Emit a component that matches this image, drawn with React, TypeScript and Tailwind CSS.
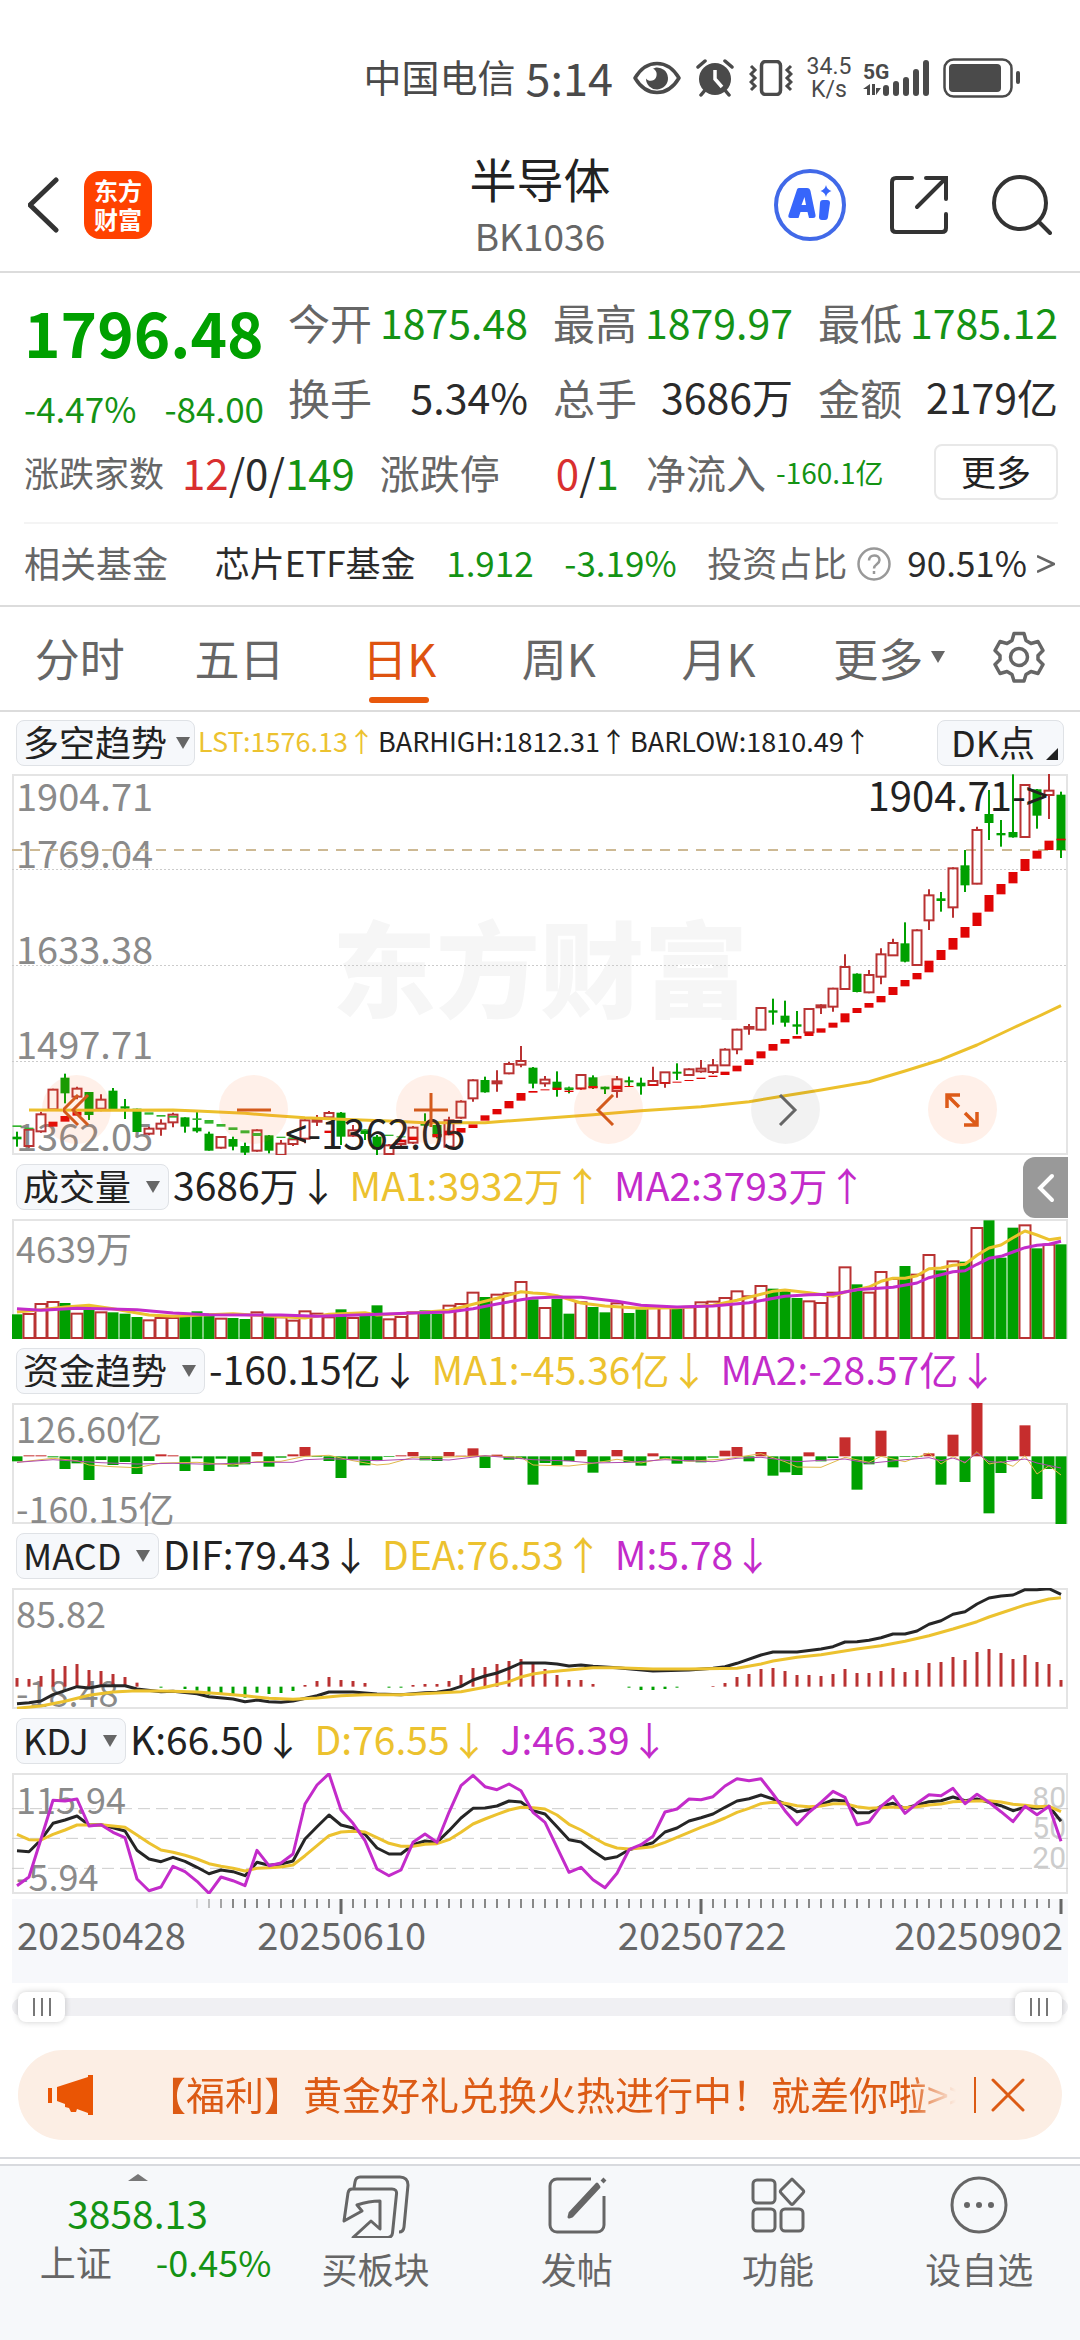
import React from "react";

const LEFT = 5;
const STEP = 12;
const px = (i: number) => LEFT + i * STEP;

type Candle = [kind: "r" | "g", high: number, low: number, top: number, bottom: number];

const candles: Candle[] = [
  ["g", 1115, 1160, 1130, 1138], ["r", 1106, 1163, 1109, 1158], ["r", 1055, 1118, 1063, 1114], ["r", 986, 1050, 989, 1048],
  ["g", 941, 1030, 953, 1000], ["r", 980, 1018, 986, 1010], ["g", 996, 1080, 996, 1065], ["r", 1003, 1054, 1019, 1046],
  ["g", 984, 1047, 992, 1047], ["g", 1017, 1077, 1039, 1046], ["g", 1046, 1116, 1046, 1116], ["r", 1100, 1126, 1106, 1121],
  ["r", 1078, 1127, 1091, 1106], ["r", 1058, 1102, 1064, 1087], ["g", 1072, 1118, 1072, 1100], ["g", 1053, 1118, 1103, 1114],
  ["g", 1115, 1172, 1121, 1172], ["r", 1128, 1166, 1131, 1163], ["g", 1130, 1171, 1137, 1160], ["g", 1148, 1185, 1158, 1178],
  ["r", 1108, 1175, 1111, 1172], ["g", 1125, 1180, 1126, 1172], ["r", 1140, 1186, 1151, 1185], ["r", 1132, 1158, 1138, 1152],
  ["r", 1078, 1150, 1081, 1136], ["r", 1065, 1098, 1080, 1085], ["r", 1053, 1075, 1059, 1072], ["g", 1056, 1155, 1058, 1130],
  ["r", 1095, 1130, 1111, 1127], ["g", 1108, 1140, 1110, 1122], ["g", 1125, 1185, 1130, 1168], ["r", 1152, 1185, 1156, 1182],
  ["r", 1138, 1165, 1142, 1152], ["r", 1098, 1152, 1103, 1148], ["g", 1060, 1130, 1090, 1097], ["g", 1092, 1135, 1095, 1130],
  ["r", 1070, 1162, 1081, 1160], ["r", 1021, 1076, 1025, 1073], ["r", 958, 1025, 961, 1015], ["g", 950, 998, 960, 997],
  ["r", 931, 995, 964, 970], ["r", 905, 943, 912, 940], ["r", 858, 922, 903, 914], ["g", 921, 985, 923, 971],
  ["r", 948, 980, 959, 970], ["g", 934, 1010, 965, 986], ["g", 980, 1000, 984, 990], ["r", 942, 989, 945, 985],
  ["g", 946, 987, 952, 984], ["g", 980, 1002, 980, 988], ["r", 948, 1013, 958, 993], ["g", 950, 978, 961, 967],
  ["g", 953, 1004, 968, 979], ["r", 920, 978, 963, 975], ["r", 936, 983, 937, 969], ["g", 910, 960, 935, 941],
  ["r", 925, 948, 928, 945], ["r", 900, 938, 926, 934], ["r", 897, 942, 916, 936], ["r", 865, 918, 869, 916],
  ["r", 806, 883, 809, 868], ["r", 792, 824, 801, 806], ["r", 741, 811, 744, 809], ["g", 716, 794, 751, 758],
  ["g", 722, 800, 767, 788], ["g", 753, 823, 793, 800], ["r", 744, 822, 747, 817], ["r", 733, 762, 736, 742],
  ["r", 683, 755, 686, 740], ["r", 583, 689, 621, 687], ["g", 640, 697, 641, 696], ["r", 630, 700, 645, 697],
  ["r", 565, 673, 583, 650], ["r", 536, 588, 549, 586], ["g", 487, 607, 550, 605], ["r", 508, 617, 511, 615],
  ["r", 388, 510, 406, 481], ["g", 396, 455, 415, 423], ["r", 322, 473, 325, 442], ["g", 270, 396, 316, 376],
  ["r", 200, 373, 210, 371], ["g", 90, 240, 162, 189], ["g", 180, 260, 219, 226], ["g", 43, 233, 216, 232],
  ["r", 72, 233, 75, 231], ["g", 87, 206, 88, 167], ["r", 42, 177, 92, 105], ["g", 95, 294, 104, 270],
];

const redBlocks: [number, number, number][] = [
  [3, 1085, 1100], [4, 1068, 1085], [5, 1055, 1067], [26, 1112, 1119], [32, 1140, 1147], [33, 1130, 1140], [35, 1122, 1132], [36, 1112, 1126],
  [37, 1104, 1118], [38, 1093, 1104], [39, 1066, 1082], [40, 1047, 1063], [41, 1023, 1045], [42, 999, 1022],
  [43, 993, 998], [44, 988, 991], [45, 983, 990], [46, 992, 996], [47, 985, 988], [48, 978, 985], [50, 977, 988],
  [51, 978, 981], [53, 973, 977], [54, 967, 970], [55, 965, 968], [56, 960, 963], [57, 953, 957], [58, 947, 951],
  [59, 935, 945], [60, 917, 934], [61, 898, 915], [62, 874, 895], [63, 852, 872], [64, 837, 851], [65, 828, 836],
  [66, 817, 828], [67, 805, 818], [68, 788, 803], [69, 760, 787], [70, 744, 759], [71, 729, 743], [72, 708, 727],
  [73, 681, 705], [74, 660, 679], [75, 639, 658], [76, 602, 637], [77, 570, 600], [78, 534, 569], [79, 501, 533],
  [80, 458, 498], [81, 405, 455], [82, 372, 403], [83, 336, 370], [84, 297, 333], [85, 272, 296], [86, 242, 270],
  [87, 236, 241],
];

const greenBlocks: [number, number, number][] = [
  [0, 1096, 1101], [1, 1103, 1107], [11, 1057, 1064], [12, 1065, 1070], [13, 1068, 1073], [15, 1075, 1080],
  [16, 1080, 1091], [17, 1092, 1100], [18, 1102, 1110], [19, 1111, 1120], [20, 1119, 1128], [22, 1130, 1134],
  [23, 1132, 1137], [29, 1108, 1113], [31, 1124, 1128], [32, 1129, 1132], [46, 982, 986],
];

type Pts = [number, number][];

const trend: Pts = [
  [1, 1050], [7, 1051], [13, 1050], [15, 1053], [19, 1060], [21, 1066], [24, 1073], [27, 1078], [31, 1083], [34, 1088], [39, 1088],
  [44, 1075], [48, 1064], [52, 1052], [57, 1040], [61, 1025], [64, 1007], [67, 990], [71, 965], [74, 933], [77, 899],
  [80, 855], [83, 804], [85, 771], [87, 737],
];

const volumes = [
  492, 488, 458, 452, 458, 487, 478, 483, 486, 490, 500, 507, 500, 500, 495, 483, 490, 502, 503, 506, 483, 500, 498,
  508, 480, 487, 498, 477, 500, 494, 465, 504, 497, 483, 480, 490, 463, 458, 424, 440, 430, 426, 392, 447, 470, 446,
  490, 453, 470, 486, 456, 488, 477, 464, 470, 474, 468, 453, 451, 440, 420, 435, 404, 415, 418, 443, 450, 455, 424,
  348, 402, 424, 362, 383, 347, 370, 311, 360, 330, 334, 230, 210, 322, 232, 222, 294, 280, 282,
];
const volMa1: Pts = [
  [0, 485], [2, 478], [4, 470], [6, 465], [8, 475], [10, 488], [11, 494], [13, 498], [15, 495], [18, 490], [21, 497],
  [24, 503], [26, 492], [29, 487], [30, 494], [33, 488], [36, 480], [38, 462], [40, 444], [42, 424], [43, 428],
  [44, 430], [45, 436], [46, 447], [47, 458], [49, 467], [52, 474], [55, 472], [58, 465], [60, 450], [62, 432],
  [63, 423], [64, 419], [66, 427], [68, 438], [69, 425], [71, 410], [72, 393], [73, 384], [74, 384], [75, 376],
  [76, 355], [77, 353], [78, 345], [79, 342], [80, 315], [81, 293], [82, 284], [83, 262], [84, 242], [85, 254],
  [86, 268], [87, 263],
];
const volMa2: Pts = [
  [0, 475], [2, 480], [5, 474], [7, 475], [10, 478], [13, 488], [16, 493], [22, 494], [25, 498], [29, 493], [33, 488],
  [36, 485], [38, 475], [40, 461], [42, 448], [43, 443], [45, 440], [47, 441], [50, 453], [52, 465], [55, 470],
  [58, 467], [61, 457], [64, 438], [66, 433], [68, 432], [70, 418], [73, 411], [75, 398], [76, 382], [78, 364],
  [79, 361], [80, 342], [81, 324], [82, 318], [83, 305], [84, 292], [85, 285], [86, 282], [87, 273],
];

const flows = [
  937, 919, 919, 925, 960, 943, 993, 933, 948, 939, 975, 936, 916, 919, 966, 928, 966, 929, 953, 946, 909, 953, 926,
  916, 894, 924, 936, 987, 932, 949, 934, 924, 919, 909, 934, 936, 909, 920, 898, 957, 917, 932, 930, 1007, 942, 948,
  936, 903, 971, 938, 903, 940, 950, 913, 930, 944, 937, 940, 926, 905, 894, 937, 909, 980, 970, 978, 910, 937, 927,
  865, 1022, 946, 845, 955, 924, 924, 913, 1007, 857, 999, 762, 1093, 972, 933, 829, 1050, 960, 1125,
];
const flowMa1: Pts = [
  [0, 940], [3, 928], [5, 935], [6, 948], [8, 953], [10, 956], [12, 942], [15, 940], [18, 948], [20, 938], [22, 937],
  [24, 922], [26, 919], [28, 935], [30, 948], [31, 945], [33, 925], [36, 924], [39, 920], [42, 925], [43, 948],
  [46, 951], [48, 943], [50, 931], [52, 942], [54, 928], [56, 937], [59, 930], [62, 914], [64, 938], [65, 954],
  [67, 955], [69, 925], [71, 940], [72, 922], [74, 938], [76, 912], [77, 945], [78, 922], [79, 942], [80, 908],
  [81, 945], [82, 938], [83, 952], [84, 920], [85, 975], [86, 950], [87, 978],
];
const flowMa2: Pts = [
  [0, 940], [3, 932], [7, 941], [10, 945], [13, 943], [16, 946], [20, 940], [23, 940], [24, 932], [26, 929], [30, 935],
  [33, 930], [36, 933], [39, 920], [43, 932], [46, 936], [48, 942], [51, 940], [54, 932], [58, 938], [60, 928],
  [62, 925], [65, 938], [69, 930], [71, 943], [74, 932], [76, 926], [77, 935], [78, 927], [79, 940], [80, 912],
  [81, 938], [82, 940], [84, 930], [85, 942], [87, 957],
];

const macd = [
  447, 450, 441, 420, 411, 405, 423, 426, 435, 444, 461, 473, 476, 473, 480, 485, 497, 497, 500, 506, 491, 495, 492,
  486, 468, 456, 444, 453, 456, 462, 473, 476, 476, 468, 465, 465, 456, 438, 417, 414, 405, 396, 390, 405, 420, 438,
  453, 453, 465, 473, 473, 476, 483, 483, 480, 476, 473, 473, 471, 462, 444, 435, 420, 417, 426, 438, 438, 441, 435,
  420, 432, 432, 426, 417, 429, 423, 402, 399, 384, 393, 369, 360, 372, 390, 378, 399, 405, 453,
];
const dif: Pts = [
  [0, 524], [1, 521], [2, 516], [3, 497], [4, 485], [5, 473], [6, 477], [7, 470], [9, 470], [10, 480], [12, 488],
  [13, 487], [15, 494], [16, 503], [18, 510], [19, 518], [20, 513], [21, 518], [22, 520], [23, 516], [25, 500],
  [26, 489], [28, 489], [30, 495], [32, 497], [34, 491], [35, 490], [36, 484], [37, 472], [38, 453], [39, 441],
  [40, 432], [41, 418], [42, 402], [44, 402], [45, 405], [46, 411], [47, 408], [48, 412], [50, 416], [53, 426],
  [56, 423], [58, 418], [59, 413], [60, 403], [62, 378], [63, 369], [65, 369], [67, 360], [68, 353], [69, 339],
  [70, 338], [71, 334], [72, 326], [73, 315], [74, 315], [75, 306], [76, 286], [77, 275], [78, 256], [79, 248],
  [80, 225], [81, 207], [82, 201], [83, 198], [84, 182], [85, 182], [86, 179], [87, 196],
];
const dea: Pts = [
  [0, 538], [2, 531], [4, 517], [6, 499], [8, 489], [10, 485], [13, 487], [15, 489], [17, 494], [19, 500], [21, 508],
  [23, 511], [25, 507], [27, 500], [29, 497], [32, 497], [35, 492], [37, 488], [39, 475], [41, 458], [42, 444],
  [43, 435], [44, 430], [46, 423], [48, 416], [50, 416], [53, 420], [56, 420], [60, 418], [62, 405], [63, 396],
  [65, 385], [67, 377], [70, 360], [72, 350], [74, 337], [76, 320], [78, 300], [80, 278], [81, 264], [84, 228],
  [86, 210], [87, 206],
];

const seq = (ys: number[]): Pts => ys.map((y, i) => [i, y]);
const kLine = seq([
  965, 968, 932, 883, 873, 861, 888, 887, 896, 906, 964, 990, 998, 985, 997, 1015, 1034, 1023, 1028, 1040, 1000, 1009,
  1005, 996, 930, 893, 858, 888, 897, 916, 957, 975, 975, 947, 936, 940, 905, 867, 838, 837, 831, 816, 819, 845, 855,
  893, 932, 939, 966, 990, 983, 962, 952, 941, 909, 897, 876, 866, 855, 835, 816, 809, 798, 810, 825, 848, 842, 827,
  813, 816, 851, 851, 832, 823, 838, 828, 818, 815, 804, 815, 810, 820, 830, 845, 835, 838, 832, 877,
]);
const dLine = seq([
  916, 932, 933, 916, 903, 888, 888, 887, 891, 895, 918, 942, 963, 970, 979, 990, 1004, 1012, 1018, 1026, 1018, 1016,
  1014, 1008, 980, 950, 920, 909, 907, 909, 926, 943, 952, 952, 946, 944, 932, 910, 885, 870, 856, 843, 835, 836, 840,
  858, 886, 903, 925, 945, 957, 960, 957, 953, 940, 925, 910, 895, 882, 867, 850, 838, 824, 820, 823, 830, 833, 831,
  824, 824, 833, 838, 836, 834, 836, 833, 828, 825, 818, 817, 816, 815, 819, 826, 829, 833, 832, 848,
]);
const jLine = seq([
  1070, 1044, 930, 814, 816, 810, 891, 887, 910, 926, 1050, 1085, 1074, 1012, 1028, 1057, 1093, 1044, 1055, 1070, 964,
  1010, 1002, 975, 825, 768, 734, 843, 883, 935, 1020, 1040, 1023, 940, 915, 940, 850, 770, 739, 773, 782, 765, 785,
  850, 880, 955, 1030, 1015, 1052, 1076, 1033, 962, 947, 922, 849, 840, 810, 812, 803, 771, 749, 755, 749, 795, 845,
  887, 850, 820, 787, 805, 887, 879, 832, 802, 853, 823, 797, 800, 778, 824, 796, 820, 848, 878, 832, 857, 832, 937,
]);

const GREEN = "#00a000";
const RED = "#b93232";
const GOLD = "#ecc22f";
const PURPLE = "#c32bca";

function Line({ pts, top, color, width = 3 }: { pts: Pts; top: number; color: string; width?: number }) {
  return (
    <polyline
      points={pts.map(([i, y]) => `${px(i)},${((y - top) / 3).toFixed(1)}`).join(" ")}
      fill="none"
      stroke={color}
      strokeWidth={width}
      strokeLinejoin="round"
    />
  );
}

function Plot({ height, children }: { height: number; children: React.ReactNode }) {
  return (
    <svg
      viewBox={`0 0 1056 ${height}`}
      preserveAspectRatio="none"
      className="absolute -inset-[2px] h-[calc(100%+4px)] w-[calc(100%+4px)]"
      aria-hidden="true"
    >
      {children}
    </svg>
  );
}

function Caret({ className = "" }: { className?: string }) {
  return (
    <svg viewBox="0 0 14 12" className={`h-3 w-3.5 fill-[#666] ${className}`} aria-hidden="true">
      <path d="M0 0h14L7 12z" />
    </svg>
  );
}

function Picker({ label, tight = false }: { label: string; tight?: boolean }) {
  return (
    <label className="relative flex h-[46px] shrink-0 items-center rounded-lg border border-[#dfe2e6] bg-[#f6f8fb]">
      <select
        aria-label={label}
        className={`h-full appearance-none bg-transparent pb-[5px] pl-[6px] text-[36px] leading-none text-[#222] ${tight ? "pr-[26px]" : "pr-[36px]"}`}
      >
        <option>{label}</option>
      </select>
      <Caret className={`pointer-events-none absolute ${tight ? "right-1" : "right-2"}`} />
    </label>
  );
}

function IndicatorBar({ name, items }: { name: string; items: [string, string][] }) {
  return (
    <div className="flex h-[64px] items-center pl-[4px] text-[39px] leading-none whitespace-nowrap">
      <Picker label={name} />
      <div className="flex gap-[12px] pb-[5px] pl-[4px]">
        {items.map(([text, color]) => (
          <span key={text} className={color}>{text}</span>
        ))}
      </div>
    </div>
  );
}

function Quote({ label, value, up }: { label: string; value: string; up?: boolean }) {
  return (
    <div className="flex items-center justify-between pb-[6px] whitespace-nowrap">
      <dt className="text-[42px] text-[#666]">{label}</dt>
      <dd className={`text-[41px] ${up ? "text-[#149314]" : "text-[#2b2b2b]"}`}>{value}</dd>
    </div>
  );
}

function StatusBar() {
  return (
    <div className="flex h-[125px] items-center justify-end pt-[31px] pr-[59px] text-[#4a4a4a]">
      <div className="flex items-center gap-[10px] pb-[4px] leading-none">
        <span className="text-[38px]">中国电信</span>
        <span className="text-[45px]">5:14</span>
      </div>
      <svg viewBox="0 0 48 34" className="ml-[20px] h-[34px] w-[48px]" aria-hidden="true">
        <path d="M2 17C8 7 16 2.500 24 2.500S40 7 46 17C40 27 32 31.500 24 31.500S8 27 2 17z" fill="none" stroke="#4a4a4a" strokeWidth="3.500" strokeLinejoin="round" />
        <path d="M23 6.500a11 11 0 1 1-10 11c2 3 8 3.500 10-1 1.500-3.500.5-7.500-3-8.800z" fill="#4a4a4a" />
      </svg>
      <svg viewBox="0 0 38 38" className="ml-[15px] h-[38px] w-[38px]" aria-hidden="true">
        <circle cx="19" cy="20" r="16" fill="#4a4a4a" />
        <path d="M2 8l7-6M36 8l-7-6M5 36l5-6M33 36l-5-6" stroke="#4a4a4a" strokeWidth="3.500" strokeLinecap="round" />
        <path d="M19 11v9l7 8" fill="none" stroke="#fff" strokeWidth="3.500" />
      </svg>
      <svg viewBox="0 0 44 36" className="ml-[15px] h-[36px] w-[44px]" fill="none" stroke="#4a4a4a" strokeWidth="3" aria-hidden="true">
        <rect x="12.500" y="1.500" width="19" height="33" rx="4" strokeWidth="3.500" />
        <path d="M2 6l4 4-4 4 4 4-4 4 4 4-4 4M42 6l-4 4 4 4-4 4 4 4-4 4 4 4" />
      </svg>
      <span className="ml-[12px] flex w-[48px] flex-col items-center font-[Roboto,sans-serif] text-[23px] leading-[23px]">
        <span>34.5</span>
        <span>K/s</span>
      </span>
      <span className="ml-[10px] flex h-[36px] w-[67px] items-end">
        <span className="flex w-[20px] flex-col">
          <span className="font-[Roboto,sans-serif] text-[21px] leading-[24px] font-bold">5G</span>
          <svg viewBox="0 0 18 12" className="h-[12px] w-[18px]" fill="#4a4a4a" aria-hidden="true">
            <path d="M7 0v11H4V5H0zM9 0h3v11H9zM13 11V4h5z" />
          </svg>
        </span>
        <svg viewBox="0 0 47 36" className="h-[36px] w-[47px]" fill="#4a4a4a" aria-hidden="true">
          <rect x="0" y="25" width="6" height="11" rx="3" />
          <rect x="10" y="21" width="6" height="15" rx="3" />
          <rect x="20" y="17" width="6" height="19" rx="3" />
          <rect x="30" y="9" width="6" height="27" rx="3" />
          <rect x="40" y="0" width="6" height="36" rx="3" />
        </svg>
      </span>
      <svg viewBox="0 0 78 40" className="ml-[13px] h-[40px] w-[78px]" aria-hidden="true">
        <rect x="1.500" y="1.500" width="67" height="37" rx="9" fill="none" stroke="#4a4a4a" strokeWidth="2.500" />
        <rect x="6" y="6" width="52" height="28" rx="4" fill="#4a4a4a" />
        <rect x="73" y="13" width="4" height="13" rx="2" fill="#4a4a4a" />
      </svg>
    </div>
  );
}

function Header() {
  return (
    <header className="grid h-[148px] grid-cols-[1fr_auto_1fr] items-center border-b-2 border-[#dcdcdc] px-[28px]">
      <div className="flex items-center gap-[22px] pt-[14px]">
        <button aria-label="返回">
          <svg viewBox="0 0 34 56" className="h-[56px] w-[34px]" fill="none" stroke="#333" strokeWidth="5" strokeLinecap="round" aria-hidden="true">
            <path d="M28 3L2 28l26 25" />
          </svg>
        </button>
        <a href="#home" className="grid size-[68px] place-content-center rounded-[16px] bg-[#ff4200] pb-[3px] text-center text-[24px] leading-[29px] font-bold text-white">
          <span>东方</span>
          <span>财富</span>
        </a>
      </div>
      <div className="flex flex-col items-center pt-[14px]">
        <h1 className="text-[47px] leading-[60px] text-[#222]">半导体</h1>
        <p className="text-[37px] leading-[54px] text-[#666]">BK1036</p>
      </div>
      <div className="flex items-center justify-end gap-[44px] pt-[14px]">
        <button aria-label="智能助手">
          <svg viewBox="0 0 72 72" className="size-[72px]" aria-hidden="true">
            <circle cx="36" cy="36" r="34" fill="none" stroke="#4169e8" strokeWidth="4" />
            <path d="M25 19h8c2 0 3 1 3.500 3l5 24c.3 2-.5 3-2.500 3h-4l-1.500-6h-7l-2 6h-8c-2 0-2.500-1-2-3l8-24c.5-2 1-3 2.500-3zM30.500 28l-3 8h4.500z" fill="#3766fb" />
            <path d="M49 31h4c2 0 3 1 3 3l-2 14c-.3 2-1 3-3 3h-3c-2 0-3-1-3-3l1-14c.2-2 1-3 3-3zM52 16c1 3.500 2 4.500 5.500 6-3.500 1.500-4.500 2.500-5.500 6-1-3.500-2-4.500-5.500-6 3.500-1.500 4.500-2.500 5.500-6z" fill="#3766fb" />
          </svg>
        </button>
        <button aria-label="分享">
          <svg viewBox="0 0 58 58" className="size-[58px]" fill="none" stroke="#333" strokeWidth="4" strokeLinecap="round" aria-hidden="true">
            <path d="M22 2H6C3.500 2 2 3.500 2 6v46c0 2.500 1.500 4 4 4h46c2.500 0 4-1.500 4-4V38" />
            <path d="M36 2h20v21M54 4L27 31" />
          </svg>
        </button>
        <button aria-label="搜索">
          <svg viewBox="0 0 60 60" className="size-[60px]" fill="none" stroke="#333" strokeWidth="4" strokeLinecap="round" aria-hidden="true">
            <circle cx="28" cy="28" r="26" />
            <path d="M47 47l11 11" />
          </svg>
        </button>
      </div>
    </header>
  );
}

function Summary() {
  return (
    <section className="border-b-2 border-[#dcdcdc] pt-[14px] pr-[22px] pl-[24px] leading-none">
      <div className="flex gap-[24px]">
        <div className="flex w-[240px] flex-col justify-between pt-[13px] pb-[12px] text-[#149314]">
          <strong className="text-[62px] text-[#00a000]">1796.48</strong>
          <div className="flex justify-between text-[35px]">
            <span>-4.47%</span>
            <span>-84.00</span>
          </div>
        </div>
        <dl className="grid flex-1 auto-rows-[75px] grid-cols-3 gap-x-[25px]">
          <Quote label="今开" value="1875.48" up />
          <Quote label="最高" value="1879.97" up />
          <Quote label="最低" value="1785.12" up />
          <Quote label="换手" value="5.34%" />
          <Quote label="总手" value="3686万" />
          <Quote label="金额" value="2179亿" />
        </dl>
      </div>
      <div className="flex h-[74px] items-center pb-[5px] text-[40px] whitespace-nowrap text-[#666]">
        <span className="text-[35px]">涨跌家数</span>
        <span className="pl-[18px] text-[42px] text-[#2b2b2b]">
          <span className="text-[#d92f2f]">12</span>/0/<span className="text-[#149314]">149</span>
        </span>
        <span className="pl-[25px]">涨跌停</span>
        <span className="pl-[56px] text-[42px] text-[#2b2b2b]">
          <span className="text-[#d92f2f]">0</span>/<span className="text-[#149314]">1</span>
        </span>
        <span className="pl-[27px]">净流入</span>
        <span className="pl-[10px] text-[28px] text-[#149314]">-160.1亿</span>
        <button className="ml-auto h-[56px] w-[124px] rounded-lg border-2 border-[#e8e8e8] pb-[3px] text-[35px] leading-none text-[#222]">更多</button>
      </div>
      <a href="#fund" className="mt-[11px] flex h-[83px] items-center justify-between border-t-2 border-[#f4f4f4] pr-[3px] pb-[6px] text-[35px] whitespace-nowrap text-[#666]">
        <span className="text-[36px]">相关基金</span>
        <span className="pl-[16px] text-[#2b2b2b]">芯片ETF基金</span>
        <span className="text-[#149314]">1.912</span>
        <span className="text-[#149314]">-3.19%</span>
        <span className="flex items-center gap-[10px]">
          投资占比
          <svg viewBox="0 0 34 34" className="mt-1 size-[34px]" fill="none" stroke="#999" strokeWidth="2.500" aria-hidden="true">
            <circle cx="17" cy="17" r="15.500" />
            <path d="M12 13.500c0-7 10.500-6.500 10.500-.5 0 4.500-5.500 4-5.500 8.500" />
            <path d="M17 24v3" />
          </svg>
          <span className="pl-[6px] text-[#2b2b2b]">90.51%</span>
          <svg viewBox="0 0 18 18" className="mt-1 h-[18px] w-[18px]" fill="none" stroke="#666" strokeWidth="2.500" aria-hidden="true">
            <path d="M0 1l17 8-17 8" />
          </svg>
        </span>
      </a>
    </section>
  );
}

function Tabs() {
  const tab = "relative flex h-full items-center justify-center pb-[3px]";
  return (
    <nav className="grid h-[105px] grid-cols-[repeat(6,1fr)_122px] border-b-2 border-[#dcdcdc] text-[45px] leading-none text-[#666]">
      <button className={tab}>分时</button>
      <button className={tab}>五日</button>
      <button className={`${tab} text-[#de5310]`} aria-current="page">
        日K
        <span className="absolute bottom-[7px] h-[6px] w-[60px] rounded-full bg-[#e8580c]" />
      </button>
      <button className={tab}>周K</button>
      <button className={tab}>月K</button>
      <button className={`${tab} gap-[8px] pl-[22px]`}>
        更多
        <Caret />
      </button>
      <button className={tab} aria-label="设置">
        <svg viewBox="0 0 52 52" className="size-[52px]" fill="none" stroke="#666" strokeWidth="3.500" strokeLinejoin="round" aria-hidden="true">
          <path d="M21 2.500h10l2 7 5 3 7-2 5 9-5 5v4l5 5-5 9-7-2-5 3-2 6.500H21l-2-6.500-5-3-7 2-5-9 5-5v-4l-5-5 5-9 7 2 5-3z" />
          <circle cx="26" cy="26" r="8.500" />
        </svg>
      </button>
    </nav>
  );
}

const axisLabel = "absolute left-[2px] leading-[38px] text-[#8a8a8a]";
const priceLabel = `${axisLabel} text-[38px]`;
const smallLabel = `${axisLabel} text-[36px]`;
const panel = "relative border-2 border-[#e4e4e4]";
const round = "grid size-[69px] place-items-center rounded-full";

function PriceChart() {
  return (
    <div className={`${panel} h-[381px]`}>
      <span className="absolute inset-0 grid place-items-center text-[104px] leading-none font-black text-[#f6f6f6]">东方财富</span>
      <Plot height={381}>
        {[95, 191, 287].map((y) => (
          <line key={y} x1="0" x2="1056" y1={y + 0.5} y2={y + 0.5} stroke="#ccc" strokeDasharray="2 2" />
        ))}
      </Plot>
      <span className={`${priceLabel} top-0`}>1904.71</span>
      <span className={`${priceLabel} top-[57px]`}>1769.04</span>
      <span className={`${priceLabel} top-[153px]`}>1633.38</span>
      <span className={`${priceLabel} top-[248px]`}>1497.71</span>
      <span className={`${priceLabel} top-[340px]`}>1362.05</span>
      <Plot height={381}>
        <line x1="0" x2="1056" y1="76" y2="76" stroke="#cdb994" strokeWidth="2" strokeDasharray="10 8" />
        {candles.map(([kind, high, low, top, bottom], i) => {
          const x = px(i);
          const y = (v: number) => (v - 42) / 3;
          return kind === "g" ? (
            <g key={i} fill={GREEN}>
              <rect x={x - 1} y={y(high)} width="2" height={y(low) - y(high)} />
              <rect x={x - 4.5} y={y(top)} width="9" height={y(bottom) - y(top)} />
            </g>
          ) : (
            <g key={i} fill="none" stroke={RED} strokeWidth="2">
              <path d={`M${x} ${y(high)}V${y(top)}M${x} ${y(bottom)}V${y(low)}`} />
              <rect x={x - 4.5} y={y(top)} width="9" height={y(bottom) - y(top)} />
            </g>
          );
        })}
        {greenBlocks.map(([i, t, b]) => (
          <rect key={i} x={px(i) - 4.5} y={(t - 42) / 3} width="9" height={(b - t) / 3} fill="#33b52f" />
        ))}
        {redBlocks.map(([i, t, b]) => (
          <rect key={i} x={px(i) - 4.5} y={(t - 42) / 3} width="9" height={(b - t) / 3} fill="#e00505" />
        ))}
        <Line pts={trend} top={42} color="#ecc02c" />
      </Plot>
      <span className="absolute top-[336px] left-[271px] text-[40px] leading-[40px] text-[#222]">&lt;-1362.05</span>
      <span className="absolute -top-[2px] right-[18px] text-[40px] leading-[40px] text-[#222]">1904.71-&gt;</span>
      <div className="absolute right-[69px] bottom-[9px] left-[28px] flex justify-between">
        <button className={`${round} bg-[#ff6a20]/10`} aria-label="快退">
          <svg viewBox="0 0 28 32" className="h-[32px] w-[28px]" fill="none" stroke="#d35a1c" strokeWidth="3" aria-hidden="true">
            <path d="M15 1L0 16l15 15M25 1L10 16l15 15" />
          </svg>
        </button>
        <button className={`${round} bg-[#ff6a20]/10`} aria-label="缩小">
          <svg viewBox="0 0 34 34" className="size-[34px]" stroke="#d35a1c" strokeWidth="3" aria-hidden="true"><path d="M0 17h34" /></svg>
        </button>
        <button className={`${round} bg-[#ff6a20]/10`} aria-label="放大">
          <svg viewBox="0 0 34 34" className="size-[34px]" stroke="#d35a1c" strokeWidth="3" aria-hidden="true"><path d="M0 17h34M17 0v34" /></svg>
        </button>
        <button className={`${round} bg-[#ff6a20]/10`} aria-label="左移">
          <svg viewBox="0 0 32 32" className="size-[32px]" fill="none" stroke="#d35a1c" strokeWidth="3" aria-hidden="true"><path d="M21 1L6 16l15 15" /></svg>
        </button>
        <button className={`${round} bg-black/5`} aria-label="右移">
          <svg viewBox="0 0 32 32" className="size-[32px]" fill="none" stroke="#666" strokeWidth="3" aria-hidden="true"><path d="M11 1l15 15-15 15" /></svg>
        </button>
        <button className={`${round} bg-[#ff6a20]/10`} aria-label="全屏">
          <svg viewBox="0 0 34 34" className="size-[34px]" fill="none" stroke="#dd5a18" strokeWidth="3.500" aria-hidden="true">
            <path d="M2 15V2h13M2 2l12 12M32 19v13H19M32 32L20 20" />
          </svg>
        </button>
      </div>
    </div>
  );
}

function VolumeChart() {
  return (
    <div className={`${panel} h-[120px]`}>
      <span className={`${smallLabel} top-[7px]`}>4639万</span>
      <Plot height={120}>
        {volumes.map((v, i) => {
          const y = (v - 206) / 3;
          return candles[i][0] === "g" ? (
            <rect key={i} x={px(i) - 5.5} y={y} width="11" height={120 - y} fill={GREEN} />
          ) : (
            <rect key={i} x={px(i) - 5.5} y={y + 1} width="11" height={118 - y} fill="#fff" stroke={RED} strokeWidth="2" />
          );
        })}
        <Line pts={volMa1} top={206} color={GOLD} />
        <Line pts={volMa2} top={206} color={PURPLE} />
      </Plot>
    </div>
  );
}

function FlowChart() {
  return (
    <div className={`${panel} h-[121px]`}>
      <span className={`${smallLabel} top-[3px]`}>126.60亿</span>
      <span className={`${smallLabel} top-[83px]`}>-160.15亿</span>
      <Plot height={121}>
        {flows.map((v, i) => (
          <rect
            key={i}
            x={px(i) - 5.5}
            y={(Math.min(v, 922) - 762) / 3}
            width="11"
            height={Math.abs(v - 922) / 3}
            fill={v < 922 ? "#c62d2d" : GREEN}
          />
        ))}
        <Line pts={flowMa1} top={762} color="#e0b84a" width={1} />
        <Line pts={flowMa2} top={762} color="#b04ab0" width={1} />
      </Plot>
    </div>
  );
}

function MacdChart() {
  return (
    <div className={`${panel} h-[121px]`}>
      <span className={`${smallLabel} top-[3px]`}>85.82</span>
      <span className={`${smallLabel} top-[82px]`}>-18.48</span>
      <Plot height={121}>
        {macd.map((v, i) => (
          <rect
            key={i}
            x={px(i) - 1.5}
            y={(Math.min(v, 473) - 177) / 3}
            width="3"
            height={Math.abs(v - 473) / 3}
            fill={v < 473 ? RED : GREEN}
          />
        ))}
        <Line pts={dif} top={177} color="#262626" />
        <Line pts={dea} top={177} color={GOLD} />
      </Plot>
    </div>
  );
}

function KdjChart() {
  return (
    <div className={`${panel} h-[121px]`}>
      <Plot height={121}>
        {[839, 928, 1018].map((y) => (
          <line key={y} x1="0" x2="1056" y1={(y - 732) / 3} y2={(y - 732) / 3} stroke="#ccc" strokeDasharray="12 6" />
        ))}
      </Plot>
      <span className={`${smallLabel} top-[4px]`}>115.94</span>
      <span className={`${smallLabel} top-[81px]`}>-5.94</span>
      <div className="absolute top-[8px] right-0 flex flex-col font-[Roboto,sans-serif] text-[30px] leading-[30px] text-[#ccc]">
        <span>80</span>
        <span>50</span>
        <span>20</span>
      </div>
      <Plot height={121}>
        <Line pts={kLine} top={732} color="#262626" />
        <Line pts={dLine} top={732} color={GOLD} />
        <Line pts={jLine} top={732} color={PURPLE} />
      </Plot>
    </div>
  );
}

function DateAxis() {
  return (
    <div className="mt-[5px] h-[84px] bg-[#f7f8fb] text-[38px] leading-none text-[#666]">
      <svg viewBox="0 0 1056 16" preserveAspectRatio="none" className="h-[16px] w-full" aria-hidden="true">
        {Array.from({ length: 73 }, (_, n) => n + 15).map((i) => {
          const major = i === 27 || i === 57 || i === 87;
          return (
            <rect
              key={i}
              x={px(i) - (major ? 1.5 : 1)}
              y="0"
              width={major ? 3 : 2}
              height={major ? 15 : 9}
              fill={major ? "#666" : "#888"}
              opacity={i < 18 ? (i - 14) * 0.25 : 1}
            />
          );
        })}
      </svg>
      <div className="flex items-center px-[5px]">
        <span className="flex-[240]">20250428</span>
        <span className="flex-[360]">20250610</span>
        <span className="flex-[276]">20250722</span>
        <span>20250902</span>
      </div>
    </div>
  );
}

const range =
  "pointer-events-none absolute inset-x-[6px] top-0 h-[30px] w-[calc(100%-12px)] appearance-none bg-transparent [&::-webkit-slider-thumb]:pointer-events-auto [&::-webkit-slider-thumb]:h-[30px] [&::-webkit-slider-thumb]:w-[47px] [&::-webkit-slider-thumb]:appearance-none [&::-webkit-slider-thumb]:rounded-[8px] [&::-webkit-slider-thumb]:bg-white [&::-webkit-slider-thumb]:bg-[repeating-linear-gradient(90deg,#777_0_2px,transparent_2px_8px)] [&::-webkit-slider-thumb]:bg-[length:18px_18px] [&::-webkit-slider-thumb]:bg-center [&::-webkit-slider-thumb]:bg-no-repeat [&::-webkit-slider-thumb]:shadow-[0_0_6px_rgba(0,0,0,0.2)]";

function RangeBar() {
  return (
    <div className="relative mt-[9px] flex h-[30px] items-center">
      <div className="h-[18px] w-full rounded-full bg-[#f0f0f3]" />
      <input type="range" aria-label="起始日期" defaultValue={0} className={range} />
      <input type="range" aria-label="结束日期" defaultValue={100} className={range} />
    </div>
  );
}

function Banner() {
  return (
    <div className="mx-[18px] mt-[28px] flex h-[90px] items-center rounded-full bg-[#fceee4] pr-[37px] pl-[30px] text-[#dc5a14]">
      <svg viewBox="0 0 46 40" className="h-[40px] w-[46px] shrink-0" fill="#ea5504" aria-hidden="true">
        <path d="M0 13h4v15H0zM9 12L40 2V0h5v40h-5v-2l-11-4-1 3h-5l-2-4-4-1v-3l-8-3z" />
      </svg>
      <a href="#welfare" className="ml-[53px] flex-1 overflow-hidden pb-[5px] text-[39px] leading-[60px] whitespace-nowrap [mask-image:linear-gradient(90deg,#000_94%,transparent)]">
        【福利】黄金好礼兑换火热进行中！就差你啦&gt;&gt;
      </a>
      <span className="ml-[18px] h-[36px] w-[2px] bg-[#dc5a14]" />
      <button aria-label="关闭" className="ml-[15px]">
        <svg viewBox="0 0 34 34" className="size-[34px]" stroke="#dc5a14" strokeWidth="3" strokeLinecap="round" aria-hidden="true">
          <path d="M2 2l30 30M32 2L2 32" />
        </svg>
      </button>
    </div>
  );
}

function NavItem({ label, children }: { label: string; children: React.ReactNode }) {
  return (
    <button className="flex flex-col items-center gap-[12px] pt-[8px] leading-none">
      <svg viewBox="0 0 70 64" className="h-[64px] w-[70px]" fill="none" stroke="#666" strokeWidth="3" strokeLinejoin="round" aria-hidden="true">
        {children}
      </svg>
      {label}
    </button>
  );
}

function BottomNav() {
  return (
    <div className="mt-[17px] border-t-2 border-[#d8dade] pt-[5px]">
      <nav className="grid h-[176px] grid-cols-[275px_repeat(4,1fr)] items-start border-t-2 border-[#d8dade] bg-[#f6f8fa] text-[36px] text-[#666]">
        <button className="flex flex-col items-center pt-[8px] leading-none">
          <svg viewBox="0 0 20 7" className="h-[7px] w-[20px] fill-[#777]" aria-hidden="true"><path d="M10 0l10 7H0z" /></svg>
          <span className="pt-[12px] text-[39px] text-[#149314]">3858.13</span>
          <span className="flex gap-[44px] pt-[11px] pl-[36px]">
            上证 <span className="text-[#149314]">-0.45%</span>
          </span>
        </button>
        <NavItem label="买板块">
          <path d="M13 14l1-6c.5-3 2-5 5-5h40c5 0 8 3 8 8l-4 42c-.3 3-2 5-5 5" />
          <path d="M3 47l4-28c.5-3 2-4 4-4h40c3 0 5 1.500 4.500 5l-4 39c-.3 3-2 4.500-5 4.500H12L30 47l9 8V27c-6 0-14 1-23 4l5 6z" />
        </NavItem>
        <NavItem label="发帖">
          <path d="M49 5H15c-4 0-7 3-7 7v39c0 4 3 7 7 7h40c4 0 7-3 7-7V22" />
          <path d="M57 13L30 42l-3 1 1-4L55 10z" fill="#666" />
          <path d="M60 5l3 3" strokeWidth="4" />
        </NavItem>
        <NavItem label="功能">
          <rect x="10" y="6" width="22" height="23" rx="4" />
          <rect x="10" y="35" width="22" height="22" rx="4" />
          <rect x="38" y="35" width="22" height="22" rx="4" />
          <path d="M49 5l11 11c1 1 1 2 0 3L50 30c-.7.7-1.300.7-2 0L38 19c-1-1-1-2 0-3z" />
        </NavItem>
        <NavItem label="设自选">
          <circle cx="35" cy="31" r="27" />
          <g fill="#666" stroke="none"><circle cx="23" cy="31" r="3" /><circle cx="35" cy="31" r="3" /><circle cx="47" cy="31" r="3" /></g>
        </NavItem>
      </nav>
    </div>
  );
}

export default function App() {
  return (
    <div className="min-h-screen w-full bg-white font-['Noto_Sans_CJK_SC',sans-serif]">
      <StatusBar />
      <Header />
      <Summary />
      <Tabs />
      <main className="px-[12px]">
        <div className="flex h-[62px] items-center px-[4px] whitespace-nowrap">
          <Picker label="多空趋势" tight />
          <div className="flex gap-[3px] pb-[5px] pl-[3px] text-[27px] leading-none text-[#222]">
            <span className="text-[#ecc22f]">LST:1576.13↑</span>
            <span>BARHIGH:1812.31↑</span>
            <span>BARLOW:1810.49↑</span>
          </div>
          <button className="relative ml-auto h-[46px] rounded-lg border border-[#dfe2e6] bg-[#f6f8fb] pr-[28px] pb-[4px] pl-[13px] text-[36px] leading-none text-[#222]">
            DK点
            <svg viewBox="0 0 12 12" className="absolute right-[5px] bottom-[5px] size-3 fill-[#222]" aria-hidden="true"><path d="M12 0v12H0z" /></svg>
          </button>
        </div>
        <PriceChart />
        <div className="relative">
          <IndicatorBar name="成交量" items={[["3686万↓", "text-[#222]"], ["MA1:3932万↑", "text-[#ecc22f]"], ["MA2:3793万↑", "text-[#c32bca]"]]} />
          <button aria-label="展开" className="absolute top-[2px] right-0 grid h-[61px] w-[45px] place-items-center rounded-l-[12px] bg-[#999]">
            <svg viewBox="0 0 18 30" className="h-[30px] w-[18px]" fill="none" stroke="#fff" strokeWidth="4" strokeLinecap="round" aria-hidden="true"><path d="M15 3L3 15l12 12" /></svg>
          </button>
        </div>
        <VolumeChart />
        <IndicatorBar name="资金趋势" items={[["-160.15亿↓", "text-[#222]"], ["MA1:-45.36亿↓", "text-[#ecc22f]"], ["MA2:-28.57亿↓", "text-[#c32bca]"]]} />
        <FlowChart />
        <IndicatorBar name="MACD" items={[["DIF:79.43↓", "text-[#222]"], ["DEA:76.53↑", "text-[#ecc22f]"], ["M:5.78↓", "text-[#c32bca]"]]} />
        <MacdChart />
        <IndicatorBar name="KDJ" items={[["K:66.50↓", "text-[#222]"], ["D:76.55↓", "text-[#ecc22f]"], ["J:46.39↓", "text-[#c32bca]"]]} />
        <KdjChart />
        <DateAxis />
        <RangeBar />
      </main>
      <Banner />
      <BottomNav />
    </div>
  );
}
